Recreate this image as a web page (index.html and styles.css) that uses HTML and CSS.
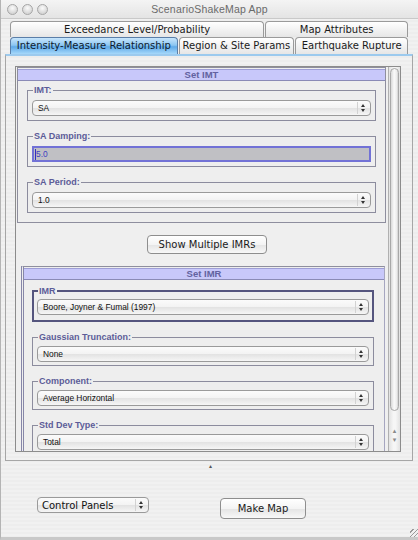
FILE: index.html
```html
<!DOCTYPE html>
<html>
<head>
<meta charset="utf-8">
<title>ScenarioShakeMap App</title>
<link rel="stylesheet" href="styles.css">
</head>
<body>
<div class="window">
  <div class="titlebar">
    <div class="lights"><span class="light"></span><span class="light"></span><span class="light"></span></div>
    <div class="title">ScenarioShakeMap App</div>
    <div></div>
  </div>

  <div class="tabs">
    <div class="tabrow">
      <div class="tab w1">Exceedance Level/Probability</div>
      <div class="tab w2">Map Attributes</div>
    </div>
    <div class="tabrow">
      <div class="tab sel w3">Intensity-Measure Relationship</div>
      <div class="tab w4">Region &amp; Site Params</div>
      <div class="tab w5">Earthquake Rupture</div>
    </div>
  </div>

  <div class="tabpanel">
    <div class="scrollpane">
      <div class="viewport">
        <div class="panel imt">
          <div class="phead">Set IMT</div>
          <fieldset class="grp">
            <legend>IMT:</legend>
            <div class="select"><span class="val">SA</span><span class="arr"></span></div>
          </fieldset>
          <fieldset class="grp">
            <legend>SA Damping:</legend>
            <div class="input"><span class="caret"></span>5.0</div>
          </fieldset>
          <fieldset class="grp g3">
            <legend>SA Period:</legend>
            <div class="select"><span class="val">1.0</span><span class="arr"></span></div>
          </fieldset>
        </div>

        <div class="btnrow"><div class="btn multi">Show Multiple IMRs</div></div>

        <div class="panel imr">
          <div class="phead">Set IMR</div>
          <fieldset class="grp thick">
            <legend>IMR</legend>
            <div class="select"><span class="val">Boore, Joyner &amp; Fumal (1997)</span><span class="arr"></span></div>
          </fieldset>
          <fieldset class="grp">
            <legend>Gaussian Truncation:</legend>
            <div class="select"><span class="val">None</span><span class="arr"></span></div>
          </fieldset>
          <fieldset class="grp">
            <legend>Component:</legend>
            <div class="select"><span class="val">Average Horizontal</span><span class="arr"></span></div>
          </fieldset>
          <fieldset class="grp">
            <legend>Std Dev Type:</legend>
            <div class="select"><span class="val">Total</span><span class="arr"></span></div>
          </fieldset>
        </div>
      </div>
      <div class="scrollbar">
        <div class="thumb"></div>
        <div class="arrows"><span>&#9652;</span><span>&#9662;</span></div>
      </div>
    </div>
  </div>

  <div class="divider">&#9652;</div>

  <div class="bottom">
    <div class="select big"><span class="val">Control Panels</span><span class="arr"></span></div>
    <div class="btn make">Make Map</div>
  </div>
  <div class="grip"></div>
</div>
</body>
</html>
```

FILE: styles.css
```css
* { box-sizing: border-box; }
html, body { margin: 0; padding: 0; }
body {
  width: 418px;
  height: 540px;
  overflow: hidden;
  font-family: "DejaVu Sans", "Liberation Sans", sans-serif;
  background: #ececec;
}
.window {
  width: 418px;
  height: 540px;
  display: flex;
  flex-direction: column;
  border-left: 1px solid #b4b4b4;
  border-bottom: 3px solid #c8c8c8;
  background: repeating-linear-gradient(to bottom, #ededed 0 2px, #f1f1f1 2px 4px);
}
.titlebar {
  height: 19px;
  display: grid;
  grid-template-columns: 1fr auto 1fr;
  align-items: center;
  background: linear-gradient(#f4f4f4, #e4e4e4);
  border-bottom: 1px solid #c9c9c9;
}
.lights { display: flex; gap: 4px; padding-left: 6px; }
.light {
  width: 11px; height: 11px; border-radius: 50%;
  border: 1px solid #a6a6a6;
  background: radial-gradient(circle at 50% 35%, #fbfbfb, #d6d6d6 70%);
}
.title {
  font-family: "Liberation Sans", sans-serif;
  font-size: 10.5px;
  color: #6a6a6a;
  letter-spacing: 0.2px;
}
.tabs { padding: 2px 10px 0 9px; }
.tabrow { display: flex; }
.tab {
  height: 16px;
  font-size: 10px;
  line-height: 15px;
  text-align: center;
  color: #1a1a1a;
  border: 1px solid #9a9a9a;
  border-bottom: none;
  border-radius: 4px 4px 0 0;
  background: linear-gradient(#ffffff, #e6e6e6);
  margin-right: 1px;
}
.tabrow + .tabrow .tab { height: 17px; line-height: 16px; }
.w1 { width: 255px; }
.w2 { width: 143px; margin-right: 0; }
.w3 { width: 168px; }
.w4 { width: 116px; }
.w5 { width: 113px; margin-right: 0; }
.tab.sel {
  background: linear-gradient(#c8e6fc 0%, #8cc6f2 45%, #5faae8 55%, #a6d8fa 100%);
  border-color: #5a7ea8;
  color: #0d1a2e;
}
.tabpanel {
  margin: 0 5px 0 4px;
  height: 407px;
  border: 1px solid #a6a6a6;
  border-top: 2px solid #9ccaee;
  padding: 10px 11px 0 9px;
}
.scrollpane {
  height: 386px;
  border: 1px solid #8c8c8c;
  display: flex;
  background: #efefef;
}
.viewport {
  flex: 1;
  overflow: hidden;
}
.panel {
  border: 1px solid #8e8e9e;
  background: #eeeeee;
}
.imt { margin: 0 2px 0 1px; height: 156px; }
.imr {
  margin: 0 3px 0 5px;
  border-left: 3px double #8686a8;
  border-right: 1px solid #a6a6c0;
  height: 200px;
}
.phead {
  height: 12px;
  background: #c8c8fa;
  border-top: 1px solid #9e9ed6;
  border-bottom: 1px solid #8a8ab6;
  margin-top: 1px;
  font-family: "Liberation Sans", sans-serif;
  font-weight: bold;
  font-size: 9.5px;
  line-height: 10px;
  color: #6262a0;
  text-align: center;
}
.grp {
  margin: 3px 9px 0 9px;
  padding: 4px 4px 4px 4px;
  border: 1px solid #8c8c9e;
  min-width: 0;
}
.grp + .grp { margin-top: 9px; }
.grp legend {
  font-family: "Liberation Sans", sans-serif;
  font-weight: bold;
  font-size: 9px;
  line-height: 12px;
  color: #5c5c98;
  padding: 0 1px 0 1px;
  margin-left: 1px;
}
.imr .grp { margin: 9px 10px 0 8px; padding: 3px 4px 3px 4px; }
.imr .grp.thick { border: 2px solid #55557e; margin-top: 5px; padding: 2px 3px 5px 3px; }
.select {
  height: 16px;
  display: flex;
  align-items: center;
  border: 1px solid #9a9a9a;
  border-radius: 4px;
  background: linear-gradient(#fbfbfb 0%, #f3f3f3 50%, #e2e2e2 51%, #f6f6f6 100%);
  font-family: "Liberation Sans", sans-serif;
  font-size: 8.4px;
  color: #111;
}
.select .val { flex: 1; padding-left: 5px; }
.arr {
  width: 10px;
  height: 12px;
  margin-right: 3px;
  border-left: 1px solid #d2d2d2;
  position: relative;
}
.arr::before, .arr::after {
  content: "";
  position: absolute;
  left: 3px;
  border-left: 2px solid transparent;
  border-right: 2px solid transparent;
}
.arr::before { top: 2px; border-bottom: 3px solid #333; }
.arr::after { top: 7px; border-top: 3px solid #333; }
.input {
  height: 16px;
  border: 2px solid #7272d6;
  background: #c0c0c4;
  font-family: "Liberation Sans", sans-serif;
  font-size: 8.4px;
  line-height: 12px;
  color: #4040c0;
  display: flex;
  align-items: center;
  padding-left: 1px;
}
.caret { width: 1px; height: 11px; background: #3030c0; }
.btnrow { display: flex; justify-content: center; padding: 12px 0 12px 10px; }
.btn {
  border: 1px solid #8e8e8e;
  border-radius: 4px;
  background: linear-gradient(#ffffff 0%, #f4f4f4 50%, #e4e4e4 51%, #f8f8f8 100%);
  font-size: 10px;
  color: #1a1a1a;
  text-align: center;
}
.multi { width: 120px; height: 19px; line-height: 17px; }
.scrollbar {
  width: 12px;
  border-left: 1px solid #b0b0b0;
  background: linear-gradient(to right, #e2e2e2, #f6f6f6 40%, #f6f6f6 60%, #e2e2e2);
  display: flex;
  flex-direction: column;
}
.thumb {
  margin: 1px 1px 0 1px;
  height: 343px;
  border: 1px solid #a8a8a8;
  border-radius: 5px;
  background: linear-gradient(to right, #d8d8d8, #fafafa 45%, #ececec 80%, #cfcfcf);
}
.arrows {
  margin-top: auto;
  margin-bottom: 6px;
  display: flex;
  flex-direction: column;
  align-items: center;
  font-size: 7px;
  line-height: 9px;
  color: #8a8a8a;
}
.divider {
  height: 14px;
  font-size: 6px;
  line-height: 10px;
  text-align: center;
  color: #555;
  padding-left: 2px;
}
.bottom {
  display: flex;
  align-items: flex-start;
  padding: 22px 0 0 36px;
}
.select.big {
  width: 112px;
  height: 16px;
  font-family: "DejaVu Sans", sans-serif;
  font-size: 10px;
}
.select.big .val { padding-left: 4px; }
.make {
  margin-left: 71px;
  margin-top: 1px;
  width: 86px;
  height: 21px;
  line-height: 19px;
}
.grip {
  margin-top: auto;
  align-self: flex-end;
  width: 8px;
  height: 8px;
  background: repeating-linear-gradient(135deg, transparent 0 2px, #9a9a9a 2px 3px);
}
```
